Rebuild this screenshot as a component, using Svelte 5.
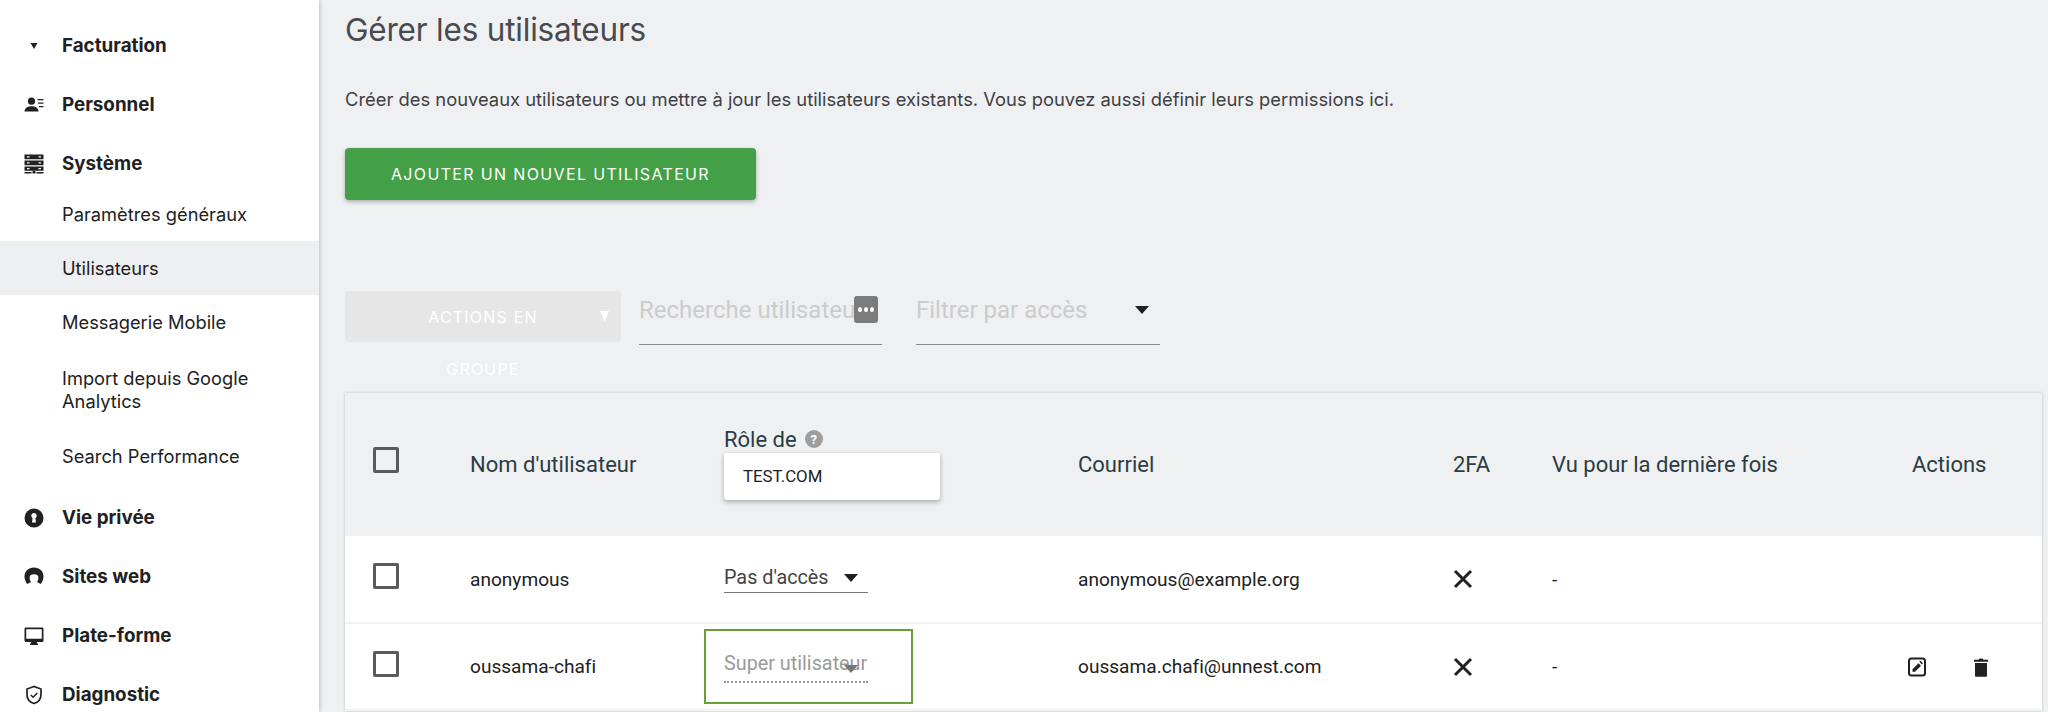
<script>
  const subItems = ['Paramètres généraux', 'Utilisateurs', 'Messagerie Mobile', 'Import depuis Google Analytics', 'Search Performance'];
  const users = [
    { name: 'anonymous', role: "Pas d'accès", mail: 'anonymous@example.org', current: false },
    { name: 'oussama-chafi', role: 'Super utilisateur', mail: 'oussama.chafi@unnest.com', current: true }
  ];
</script>

{#snippet caret(cls)}
  <svg class={cls} viewBox="0 0 14 8" preserveAspectRatio="none"><path d="M0 0h14L7 8z" /></svg>
{/snippet}

{#snippet navItem(label, kind)}
  <div class="nav-item">
    <span class="nav-icon">
      <svg viewBox="0 0 24 24" width="24" height="24" fill="#212121">
        {#if kind === 'bill'}
          <path d="M8.500 9h7L12 15z" />
        {:else if kind === 'people'}
          <circle cx="9.5" cy="8.2" r="3.6" />
          <path d="M2.500 18.500c0-3.400 3.400-5.200 7-5.200s7 1.800 7 5.200z" />
          <path d="M15.500 6h6v1.300h-6zM16 9.500h5.500v1.300H16zM17 13h4.500v1.300H17z" />
        {:else if kind === 'server'}
          <path d="M2.500 2.500h19v4.800h-19zM2.500 8.500h19v4.800h-19zM2.500 14.500h19v4.300h-19zM2.500 20h7v1.500h-7zM14.500 20h7v1.500h-7zM10.500 19h3v2.500h-3z" />
          <path fill="#fff" d="M5 4.300h2.500v1.300H5zM16.500 4.300h2.500v1.300h-2.500zM5 10.300h2.500v1.300H5zM16.500 10.300h2.500v1.300h-2.500zM5 16h2.500v1.300H5zM16.500 16h2.500v1.300h-2.500z" />
        {:else if kind === 'privacy'}
          <path fill-rule="evenodd" d="M12 2.500a9.500 9.500 0 1 0 0 19 9.500 9.500 0 0 0 0-19zm0 4.500a2.800 2.800 0 0 1 1.400 5.200l.6 4.300h-4l.6-4.300A2.800 2.800 0 0 1 12 7z" />
        {:else if kind === 'web'}
          <path d="M12 2.500c-5.500 0-9.500 3.900-9.500 8.800 0 3 1 5.300 2.700 7.700l3.800-1.900c-.9-1.400-1.400-2.900-1.400-4.600 0-2 1.800-3.200 4.400-3.200s4.400 1.200 4.400 3.200c0 1.700-.5 3.200-1.400 4.600l3.800 1.900c1.700-2.400 2.700-4.700 2.700-7.700 0-4.900-4-8.800-9.500-8.800z" />
        {:else if kind === 'desktop'}
          <path d="M4 3.500h16c1 0 1.500.6 1.500 1.500v11.500c0 .9-.5 1.500-1.500 1.500h-5.500l1.500 2.200v.8H8v-.8L9.500 18H4c-1 0-1.500-.6-1.500-1.500V5c0-.9.5-1.500 1.500-1.500zm.2 1.700v9.500h15.600V5.200z" />
        {:else}
          <path d="M12 3.500 5 6v5.500c0 4.300 2.900 7.800 7 9 4.100-1.200 7-4.700 7-9V6z" fill="none" stroke="#212121" stroke-width="1.700" />
          <path d="m8.800 12 2.300 2.300 4.200-4.300" fill="none" stroke="#212121" stroke-width="1.500" />
        {/if}
      </svg>
    </span>
    <span>{label}</span>
  </div>
{/snippet}

<div class="page">
  <aside class="sidebar">
    {@render navItem('Facturation', 'bill')}
    {@render navItem('Personnel', 'people')}
    {@render navItem('Système', 'server')}
    <div class="sub-list">
      {#each subItems as item}
        <div class="sub-item" class:active={item === 'Utilisateurs'} class:tall={item.length > 25}>{item}</div>
      {/each}
    </div>
    {@render navItem('Vie privée', 'privacy')}
    {@render navItem('Sites web', 'web')}
    {@render navItem('Plate-forme', 'desktop')}
    {@render navItem('Diagnostic', 'shield')}
  </aside>

  <main class="content">
    <h1>Gérer les utilisateurs</h1>
    <p class="intro">Créer des nouveaux utilisateurs ou mettre à jour les utilisateurs existants. Vous pouvez aussi définir leurs permissions ici.</p>
    <button class="add-btn" type="button">AJOUTER UN NOUVEL UTILISATEUR</button>

    <div class="toolbar">
      <div class="bulk">
        <span class="bulk-label">ACTIONS EN GROUPE</span>
        {@render caret('bulk-caret')}
      </div>
      <div class="field search">
        <input type="text" placeholder="Recherche utilisateur" />
        <span class="dots"><i></i><i></i><i></i></span>
      </div>
      <div class="field filter">
        <span>Filtrer par accès</span>
        {@render caret('filter-caret')}
      </div>
    </div>

    <div class="card">
      <table>
        <colgroup>
          <col class="c-check" /><col class="c-name" /><col class="c-role" /><col class="c-mail" /><col class="c-fa" /><col class="c-seen" /><col />
        </colgroup>
        <thead>
          <tr>
            <th><div class="check head-check"></div></th>
            <th>Nom d'utilisateur</th>
            <th class="role-head">
              <div class="role-title">Rôle de <span class="help">?</span></div>
              <div class="site-pop">TEST.COM</div>
            </th>
            <th>Courriel</th>
            <th>2FA</th>
            <th>Vu pour la dernière fois</th>
            <th>Actions</th>
          </tr>
        </thead>
        <tbody>
          {#each users as user}
            <tr>
              <td><div class="check"></div></td>
              <td>{user.name}</td>
              <td>
                {#if user.current}
                  <div class="role-focus">
                    <div class="role-select disabled">
                      <span>{user.role}</span>
                      {@render caret('role-caret')}
                    </div>
                  </div>
                {:else}
                  <div class="role-select">
                    <span>{user.role}</span>
                    {@render caret('role-caret')}
                  </div>
                {/if}
              </td>
              <td>{user.mail}</td>
              <td>
                <svg class="cross" viewBox="0 0 20 20" width="20" height="20"><path d="M2 2l16 16M18 2 2 18" stroke="#212121" stroke-width="3" fill="none" /></svg>
              </td>
              <td>-</td>
              <td>
                {#if user.current}
                  <div class="actions">
                    <svg viewBox="0 0 20 20" width="20" height="20">
                      <rect x="2" y="1.500" width="16" height="17" rx="2.500" fill="none" stroke="#212121" stroke-width="2" />
                      <path d="M5.500 14.800v-2.500l6-6 2.500 2.500-6 6zM12.300 4.800l1.200-1.100 2.500 2.500-1.100 1.200z" fill="#212121" />
                    </svg>
                    <svg viewBox="0 0 20 20" width="20" height="20">
                      <path d="M4 6h12v12.500c0 .8-.5 1.300-1.300 1.300H5.300c-.8 0-1.300-.5-1.300-1.300zM3 2.800h4.500l1-1.300h3l1 1.300H17v2H3z" fill="#212121" />
                    </svg>
                  </div>
                {/if}
              </td>
            </tr>
          {/each}
        </tbody>
      </table>
    </div>
  </main>
</div>

<style>
  :global(body) {
    margin: 0;
    background: #eff0f2;
  }

  .page {
    display: flex;
    height: 712px;
    overflow: hidden;
    font-family: Inter, "Liberation Sans", sans-serif;
    color: #212121;
  }

  .sidebar {
    flex: none;
    box-sizing: border-box;
    width: 319px;
    height: 712px;
    padding-top: 16px;
    background: #fff;
    box-shadow: 1px 0 4px rgba(0, 0, 0, 0.2);
    font-size: 18.3px;
  }

  .nav-item {
    display: flex;
    align-items: center;
    height: 59px;
    font-size: 18.8px;
    font-weight: 700;
  }

  .nav-icon {
    display: flex;
    justify-content: center;
    width: 62px;
    padding-left: 5px;
    box-sizing: border-box;
  }

  .sub-list {
    margin: -6px 0 5px;
  }

  .sub-item {
    box-sizing: border-box;
    display: flex;
    align-items: center;
    height: 54px;
    padding: 1px 40px 0 62px;
    line-height: 23px;
  }

  .sub-item.tall {
    height: 80px;
  }

  .sub-item.active {
    background: #eeeff1;
  }

  .content {
    flex: 1;
    min-width: 0;
    padding: 10px 6px 0 26px;
  }

  h1 {
    margin: 0;
    font-size: 31.5px;
    line-height: 40px;
    font-weight: 400;
    color: #484a4d;
    letter-spacing: -0.2px;
  }

  .intro {
    margin: 37px 0 0;
    font-size: 18.37px;
    line-height: 24px;
    color: #3f4144;
  }

  .add-btn {
    display: block;
    width: 411px;
    height: 52px;
    margin-top: 37px;
    padding: 0;
    border: 0;
    border-radius: 4px;
    background: #43a047;
    box-shadow: 0 2px 4px rgba(0, 0, 0, 0.28);
    color: #fff;
    font: 400 16px Inter, "Liberation Sans", sans-serif;
    letter-spacing: 1.35px;
  }

  .toolbar {
    display: flex;
    align-items: flex-start;
    margin-top: 91px;
    height: 102px;
  }

  .bulk {
    position: relative;
    box-sizing: border-box;
    width: 276px;
    height: 51px;
    padding: 0 50px;
    border-radius: 4px;
    background: #e6e6e6;
    color: #fff;
    font: 400 16px/52px Inter, sans-serif;
    letter-spacing: 1.2px;
    text-align: center;
  }

  .bulk-label {
    display: block;
    width: 176px;
  }

  :global(.bulk-caret) {
    position: absolute;
    top: 20px;
    right: 12px;
    width: 9px;
    height: 11px;
    fill: #fff;
  }

  .field {
    position: relative;
    box-sizing: border-box;
    height: 54px;
    border-bottom: 1px solid #8a8a8a;
    font: 400 24px/1 Roboto, sans-serif;
    color: #ccc;
  }

  .search {
    width: 243px;
    margin-left: 18px;
  }

  .search input {
    box-sizing: border-box;
    width: 222px;
    height: 38px;
    margin-top: 0;
    padding: 0;
    border: 0;
    outline: 0;
    background: none;
    font: inherit;
  }

  .search input::placeholder {
    color: #ccc;
    opacity: 1;
  }

  .dots {
    position: absolute;
    top: 5px;
    right: 4px;
    display: flex;
    align-items: center;
    justify-content: center;
    gap: 2px;
    width: 24px;
    height: 27px;
    border-radius: 3px;
    background: #7b7b7b;
  }

  .dots i {
    width: 4px;
    height: 5px;
    border-radius: 50%;
    background: #fff;
  }

  .filter {
    display: flex;
    justify-content: space-between;
    width: 244px;
    margin-left: 34px;
    padding: 7px 11px 0 0;
  }

  :global(.filter-caret) {
    width: 14px;
    height: 8px;
    margin-top: 8px;
    fill: #212121;
  }

  .card {
    background: #fff;
    box-shadow: 0 0 3px rgba(0, 0, 0, 0.2);
  }

  table {
    width: 100%;
    table-layout: fixed;
    border-collapse: collapse;
    font-family: Roboto, sans-serif;
    font-variant-ligatures: none;
  }

  .c-check { width: 125px; }
  .c-name { width: 254px; }
  .c-role { width: 354px; }
  .c-mail { width: 375px; }
  .c-fa { width: 99px; }
  .c-seen { width: 360px; }

  th {
    box-sizing: border-box;
    height: 143px;
    padding: 0;
    background: #eff0f2;
    font-size: 22px;
    font-weight: 400;
    text-align: left;
    color: #2b3c44;
  }

  td {
    height: 87px;
    padding: 0;
    border-bottom: 2px solid #f2f2f2;
    box-sizing: border-box;
    font-size: 19.1px;
    color: #212121;
  }

  .check {
    box-sizing: border-box;
    width: 26px;
    height: 26px;
    margin: 0 0 6px 28px;
    border: 3px solid #5a5a5a;
    border-radius: 2px;
  }

  .head-check {
    margin-bottom: 9px;
  }

  .role-head {
    vertical-align: top;
    padding-top: 33px;
  }

  .role-title {
    display: flex;
    align-items: center;
    gap: 8px;
    height: 26px;
  }

  .help {
    display: inline-flex;
    align-items: center;
    justify-content: center;
    width: 18px;
    height: 18px;
    border-radius: 50%;
    background: #9e9e9e;
    color: #fff;
    font-size: 13px;
    font-weight: 700;
  }

  .site-pop {
    box-sizing: border-box;
    width: 216px;
    height: 47px;
    margin-top: 1px;
    padding-left: 19px;
    border-radius: 3px;
    background: #fff;
    box-shadow: 0 2px 5px rgba(0, 0, 0, 0.3);
    color: #212121;
    font-size: 16.8px;
    line-height: 47px;
  }

  .role-select {
    position: relative;
    box-sizing: border-box;
    width: 144px;
    height: 33px;
    margin-bottom: 6px;
    padding-top: 6px;
    border-bottom: 1px solid #777;
    font-size: 19.8px;
    line-height: 24px;
    color: #444;
    white-space: nowrap;
  }

  .role-select.disabled {
    height: 32px;
    margin-bottom: 0;
    padding-top: 1px;
    border-bottom: 2px dotted #9a9a9a;
    color: #9a9a9a;
  }

  :global(.role-caret) {
    position: absolute;
    top: 14px;
    right: 10px;
    width: 14px;
    height: 8px;
    fill: #212121;
  }

  .role-select.disabled :global(.role-caret) {
    fill: #777;
  }

  .role-focus {
    box-sizing: border-box;
    display: flex;
    align-items: center;
    width: 209px;
    height: 75px;
    margin-left: -20px;
    padding: 0 0 0 18px;
    border: 2px solid #689f38;
  }

  .cross {
    display: block;
  }

  .actions {
    display: flex;
    gap: 44px;
    margin-left: -5px;
  }
</style>
